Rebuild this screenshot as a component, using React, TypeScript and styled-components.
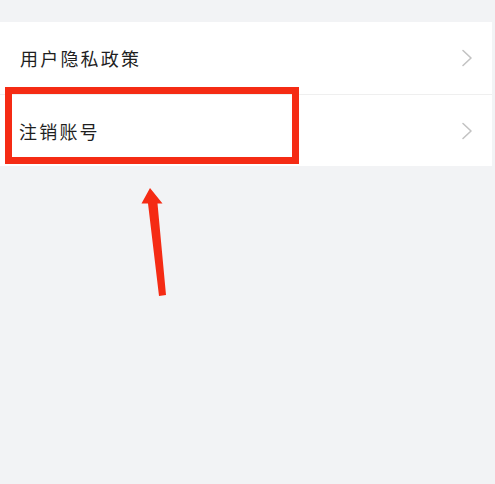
import styled, { createGlobalStyle } from 'styled-components';

const GlobalStyle = createGlobalStyle`
  html, body {
    margin: 0;
    padding: 0;
    background: #f2f3f5;
  }
`;

const Page = styled.div`
  position: relative;
  width: 495px;
  height: 484px;
  padding-top: 22px;
  box-sizing: border-box;
  background: #f2f3f5;
  font-family: "Noto Sans CJK SC", "Noto Sans", sans-serif;
  overflow: hidden;
`;

const Card = styled.div`
  width: 492px;
  background: #ffffff;
`;

const Row = styled.div<{ $height: number; $divider?: boolean }>`
  display: flex;
  align-items: center;
  justify-content: space-between;
  height: ${({ $height }) => $height}px;
  padding: 0 19px 0 20px;
  box-sizing: border-box;
  border-bottom: ${({ $divider }) => ($divider ? '1px solid #efefef' : 'none')};
`;

const Label = styled.span<{ $offset?: number }>`
  font-size: 18px;
  letter-spacing: 2.2px;
  color: #1f1f1f;
  margin-left: ${({ $offset }) => $offset ?? 0}px;
`;

const Chevron = () => (
  <svg width="12" height="18" viewBox="0 0 12 18">
    <polyline
      points="2,1.5 10,9 2,16.5"
      fill="none"
      stroke="#c3c3c3"
      strokeWidth="1.6"
      strokeLinecap="round"
      strokeLinejoin="round"
    />
  </svg>
);

const Highlight = styled.div`
  position: absolute;
  left: 5px;
  top: 87px;
  width: 294px;
  height: 77px;
  box-sizing: border-box;
  border: 7px solid #f52b14;
`;

const Arrow = styled.svg`
  position: absolute;
  left: 0;
  top: 0;
`;

export default function App() {
  return (
    <Page>
      <GlobalStyle />
      <Card>
        <Row $height={73} $divider>
          <Label>用户隐私政策</Label>
          <Chevron />
        </Row>
        <Row $height={71}>
          <Label $offset={-1}>注销账号</Label>
          <Chevron />
        </Row>
      </Card>
      <Highlight />
      <Arrow width="495" height="484" viewBox="0 0 495 484">
        <polygon
          points="150,188 162.5,203.5 157.5,203.5 166,295 159,296 148,203.5 141.5,203.5"
          fill="#f52b14"
        />
      </Arrow>
    </Page>
  );
}
